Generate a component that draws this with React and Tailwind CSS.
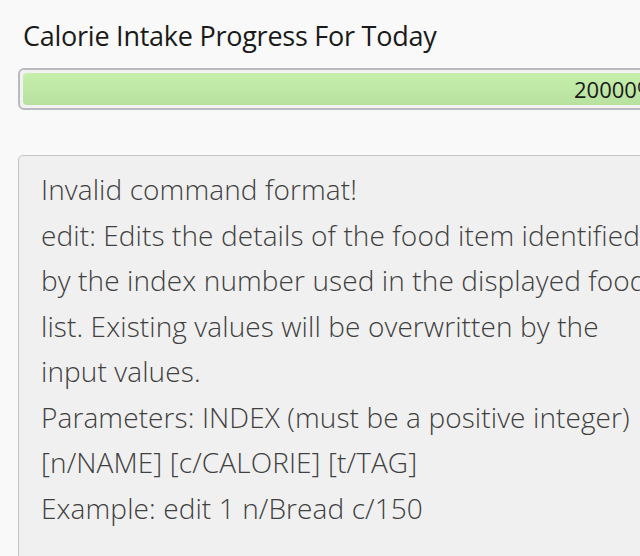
export default function App() {
  const lines = [
    'Invalid command format!',
    'edit: Edits the details of the food item identified',
    'by the index number used in the displayed food',
    'list. Existing values will be overwritten by the',
    'input values.',
    'Parameters: INDEX (must be a positive integer)',
    '[n/NAME] [c/CALORIE] [t/TAG]',
    'Example: edit 1 n/Bread c/150',
  ];

  return (
    <div className="h-[556px] w-[640px] overflow-hidden bg-[#f9f9f9] font-['Open_Sans',sans-serif]">
      <div className="w-[1200px] pl-[18px]">
        <h1 className="pl-[5px] pt-[18px] text-[27px] leading-[36px] tracking-[-0.25px] text-[#1a1a1a]">
          Calorie Intake Progress For Today
        </h1>
        <div className="mt-[14px] h-[42px] rounded-[6px] border-2 border-[#b9b9c0] bg-[#f2f2f2] p-[3px]">
          <div className="flex h-full items-center rounded-[4px] bg-gradient-to-b from-[#c6efac] to-[#b8e09e] pl-[551px] text-[22px] text-[#1a1a1a]">
            <span>20000%</span>
          </div>
        </div>
        <div className="mt-[45px] h-[420px] rounded-t-[5px] border border-[#c4c4c4] bg-[#f0f0f0] px-[22px] pt-[11px]">
          {lines.map((l) => (
            <div key={l} className="text-[28px] font-[350] leading-[45.5px] tracking-[0.1px] text-[#404040]">
              {l}
            </div>
          ))}
        </div>
      </div>
    </div>
  );
}
